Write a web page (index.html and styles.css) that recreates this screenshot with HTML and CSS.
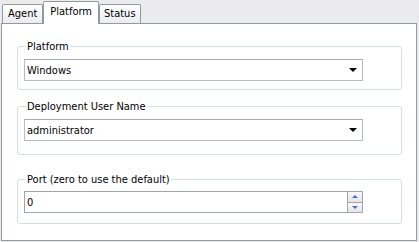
FILE: index.html
```html
<!DOCTYPE html>
<html lang="en">
<head>
    <meta charset="UTF-8">
    <title>Agent Properties</title>
    <link rel="stylesheet" href="styles.css">
</head>
<body>
    <div class="tabctl">
        <div class="tabs">
            <div class="tab">Agent</div>
            <div class="tab active">Platform</div>
            <div class="tab">Status</div>
        </div>
        <div class="panel">
            <fieldset class="group">
                <legend>Platform</legend>
                <div class="combo">
                    <span>Windows</span>
                    <span class="arrow"></span>
                </div>
            </fieldset>

            <fieldset class="group group-user">
                <legend>Deployment User Name</legend>
                <div class="combo">
                    <span>administrator</span>
                    <span class="arrow"></span>
                </div>
            </fieldset>

            <fieldset class="group group-port">
                <legend>Port (zero to use the default)</legend>
                <div class="spin">
                    <span class="value">0</span>
                    <div class="spin-btns">
                        <div class="spin-btn"><span class="up"></span></div>
                        <div class="spin-btn"><span class="down"></span></div>
                    </div>
                </div>
            </fieldset>
        </div>
    </div>
</body>
</html>
```

FILE: styles.css
```css
body {
    margin: 0;
    background-color: #ebebee;
    font-family: "DejaVu Sans Condensed", "Liberation Sans", sans-serif;
    font-size: 11px;
    color: #000;
}
.tabctl {
    padding: 1px 2px 0 1px;
}
.tabs {
    display: flex;
    align-items: flex-end;
    height: 22px;
    padding-left: 1px;
}
.tab {
    height: 18px;
    line-height: 18px;
    padding: 0 5px;
    border: 1px solid #919b9c;
    border-bottom: none;
    border-radius: 2px 2px 0 0;
    background: linear-gradient(#fefefe, #ececf0);
}
.tab:last-child {
    padding: 0 4px;
}
.tab.active {
    height: 22px;
    line-height: 20px;
    padding: 0 6px;
    background: #fff;
    margin-bottom: -1px;
    position: relative;
    z-index: 1;
}
.panel {
    background: #fff;
    border: 1px solid #919b9c;
    height: 200px;
    padding: 16px 14px 0 15px;
}
.group {
    border: 1px solid #d5dde5;
    border-radius: 3px;
    margin: 0 0 10px;
    padding: 6px 38px 8px 6px;
}
.group-user {
    padding-bottom: 13px;
    margin-bottom: 18px;
}
.group-port {
    padding-top: 5px;
    padding-bottom: 10px;
}
.group legend {
    padding: 0 1px;
    margin-left: 2px;
}
.combo, .spin {
    display: flex;
    align-items: center;
    height: 20px;
    border: 1px solid #b5bcc6;
    border-top-color: #a5acb5;
    padding-left: 2px;
}
.combo span:first-child, .spin .value {
    flex: 1;
}
.arrow {
    width: 0;
    height: 0;
    border-left: 4px solid transparent;
    border-right: 4px solid transparent;
    border-top: 4px solid #000;
    margin-right: 5px;
}
.spin {
    border-color: #a0a4ab;
}
.spin-btns {
    display: flex;
    flex-direction: column;
    width: 14px;
    height: 20px;
    border-left: 1px solid #a0a4ab;
}
.spin-btn {
    flex: 1;
    display: flex;
    align-items: center;
    justify-content: center;
    background: linear-gradient(#fafafb, #e4e5ea);
}
.spin-btn + .spin-btn {
    border-top: 1px solid #a0a4ab;
}
.up, .down {
    width: 0;
    height: 0;
    border-left: 3px solid transparent;
    border-right: 3px solid transparent;
}
.up {
    border-bottom: 3px solid #4f6bc4;
}
.down {
    border-top: 3px solid #4f6bc4;
}
```
